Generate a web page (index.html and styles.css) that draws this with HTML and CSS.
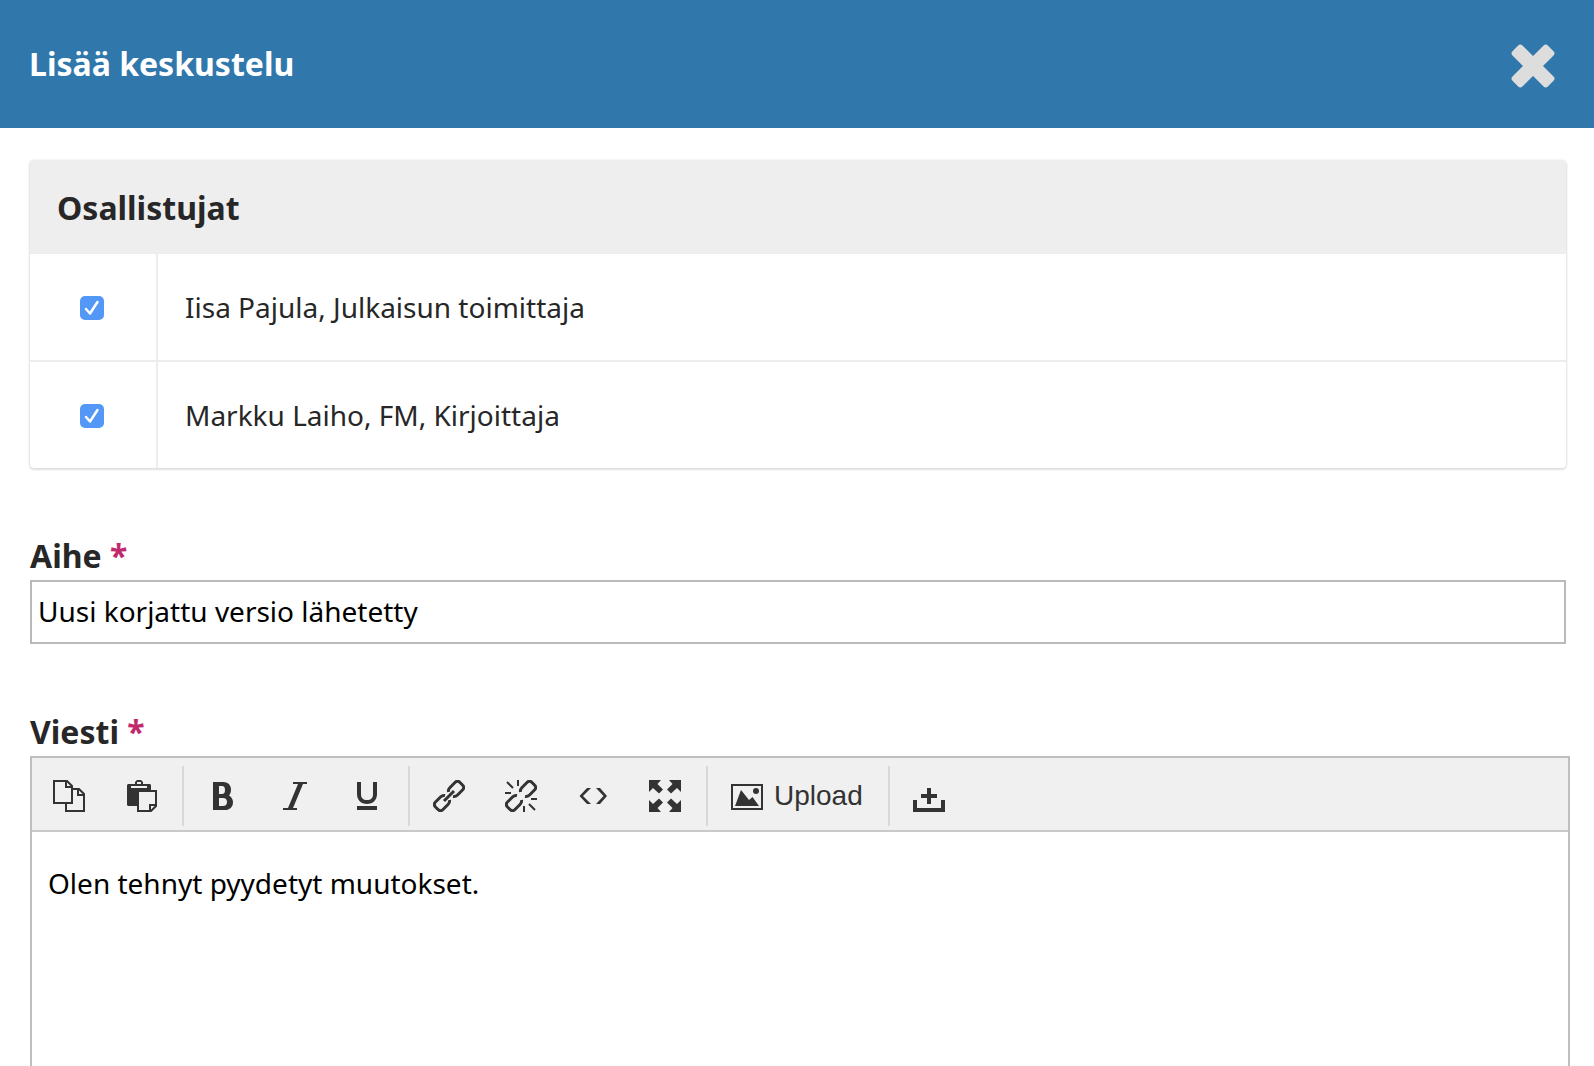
FILE: index.html
```html
<!DOCTYPE html>
<html lang="fi">
<head>
<meta charset="utf-8">
<meta name="viewport" content="width=device-width, initial-scale=1">
<title>Lisää keskustelu</title>
<link rel="stylesheet" href="styles.css">
</head>
<body>
<div class="modal" role="dialog" aria-labelledby="modal-title">
  <header class="modal-header">
    <h1 class="modal-title" id="modal-title">Lisää keskustelu</h1>
    <button class="close" type="button" aria-label="Sulje">
      <svg width="44" height="48" viewBox="-22 -26 44 48" fill="currentColor">
        <rect x="-25" y="-7" width="50" height="14" rx="3" transform="rotate(45)"/>
        <rect x="-25" y="-7" width="50" height="14" rx="3" transform="rotate(-45)"/>
      </svg>
    </button>
  </header>

  <form class="modal-body">
    <table class="participants">
      <thead>
        <tr><th colspan="2">Osallistujat</th></tr>
      </thead>
      <tbody>
        <tr>
          <td class="pick"><input class="check" type="checkbox" id="user-1" checked></td>
          <td><label for="user-1">Iisa Pajula, Julkaisun toimittaja</label></td>
        </tr>
        <tr>
          <td class="pick"><input class="check" type="checkbox" id="user-2" checked></td>
          <td><label for="user-2">Markku Laiho, FM, Kirjoittaja</label></td>
        </tr>
      </tbody>
    </table>

    <div class="field">
      <label class="field-label" for="subject">Aihe <span class="required">*</span></label>
      <input class="text-input" type="text" id="subject" value="Uusi korjattu versio lähetetty">
    </div>

    <div class="field field-message">
      <label class="field-label" for="message">Viesti <span class="required">*</span></label>
      <div class="editor">
        <div class="toolbar" role="toolbar">
          <div class="group">
            <button class="tool" type="button" aria-label="Copy">
              <svg class="icon line" viewBox="0 0 32 32"><path d="M1 1H14L19 6V23H1ZM13 1V7H19M19 9H26L31 14V31H13V23M25 9V15H31"/></svg>
            </button>
            <button class="tool" type="button" aria-label="Paste">
              <svg class="icon" viewBox="0 0 32 32"><path fill-rule="evenodd" d="M2 5L3 4H10V2L12 0H16L18 2V4H25L26 5V10H12V26H3L2 25ZM12 2V4H16V2ZM6 6V8H22V6Z"/><path class="line" d="M13 11H31V26L26 31H13ZM25 31V25H31"/></svg>
            </button>
          </div>
          <div class="group">
            <button class="tool" type="button" aria-label="Bold">
              <svg class="icon" viewBox="0 0 32 32"><path fill-rule="evenodd" d="M6 2H16C21 2 24 5 24 9.500C24 12 23.500 14 22 15.400C24.600 17 26 19.400 26 22.200C26 27 22.600 30 18 30H6ZM12 6V14H15C17 14 18 12.400 18 10S17 6 15 6ZM12 18V26H16C18.600 26 20 24.400 20 22S18.600 18 16 18Z"/></svg>
            </button>
            <button class="tool" type="button" aria-label="Italic">
              <svg class="icon" viewBox="0 0 32 32"><path d="M14 2H28V4H24L14 28H18V30H4V28H9L19 4H14Z"/></svg>
            </button>
            <button class="tool" type="button" aria-label="Underline">
              <svg class="icon" viewBox="0 0 32 32"><path d="M6 2H10V14C10 18 12 20 16 20S22 18 22 14V2H26V14C26 20 22 24 16 24S6 20 6 14ZM6 26H26V30H6Z"/></svg>
            </button>
          </div>
          <div class="group">
            <button class="tool" type="button" aria-label="Insert link">
              <svg class="icon line chain" viewBox="0 0 32 32"><path d="M15.500 12Q15 9.500 17 7.500L22 2.500Q24.500 0 27 2.500L29.500 5Q32 7.500 29.500 10L24.500 15Q22.500 17 20 16.500M16.500 20Q17 22.500 15 24.500L10 29.500Q7.500 32 5 29.500L2.500 27Q0 24.500 2.500 22L7.500 17Q9.500 15 12 15.500M11 21L21 11"/></svg>
            </button>
            <button class="tool" type="button" aria-label="Remove link">
              <svg class="icon line" viewBox="0 0 32 32"><path class="chain" d="M15.500 12Q15 9.500 17 7.500L22 2.500Q24.500 0 27 2.500L29.500 5Q32 7.500 29.500 10L24.500 15Q22.500 17 20 16.500M16.500 20Q17 22.500 15 24.500L10 29.500Q7.500 32 5 29.500L2.500 27Q0 24.500 2.500 22L7.500 17Q9.500 15 12 15.500"/><path d="M2 2L8 8M13 0V6M0 13H6M26 19H32M19 26V32M24 24L30 30"/></svg>
            </button>
            <button class="tool" type="button" aria-label="Source code">
              <svg class="icon" viewBox="0 0 32 32"><path d="M10 8H14L6 16L14 24H10L2.500 16ZM19 8H23L30 16L23 24H19L26.500 16Z"/></svg>
            </button>
            <button class="tool" type="button" aria-label="Fullscreen">
              <svg class="icon" viewBox="0 0 32 32"><path d="M0 0H12L8.500 4L14 9.500L10 13.500L4 8L0 12ZM32 0V12L28 8L22 13.500L18 9.500L23.500 4L20 0ZM0 32V20L4 24L10 18.500L14 22.500L8.500 28L12 32ZM32 32H20L23.500 28L18 22.500L22 18.500L28 24L32 20Z"/></svg>
            </button>
          </div>
          <div class="group">
            <button class="tool" type="button">
              <svg class="icon" viewBox="0 0 32 32"><path fill-rule="evenodd" d="M0 4H32V30H0ZM2 6V28H30V6Z"/><path d="M4 26L10 10L18 20L21.500 17L28 26Z"/><circle cx="25" cy="11" r="3"/></svg>
              Upload
            </button>
          </div>
          <div class="group">
            <button class="tool" type="button" aria-label="Insert content">
              <svg class="icon" viewBox="0 0 32 32"><path d="M0 20H4V28H28V20H32V32H0ZM14 8H18V14H24V18H18V24H14V18H8V14H14Z"/></svg>
            </button>
          </div>
        </div>
        <textarea class="message" id="message">Olen tehnyt pyydetyt muutokset.</textarea>
      </div>
    </div>
  </form>
</div>
</body>
</html>
```
FILE: styles.css
```css
* {
  box-sizing: border-box;
}

body {
  margin: 0;
  background: #fff;
  color: #272727;
  font: 28px/40px "Noto Sans", sans-serif;
}

.modal {
  display: flex;
  flex-direction: column;
  min-height: 100vh;
}

.modal-header {
  display: flex;
  align-items: center;
  justify-content: space-between;
  height: 128px;
  padding: 0 39px 0 29px;
  background: #3077ac;
  color: #fff;
}

.modal-title {
  margin: 0;
  font-size: 32px;
  font-weight: 700;
}

button {
  border: 0;
  background: none;
  font: inherit;
  cursor: pointer;
}

.close {
  display: flex;
  padding: 0;
  color: #ddd;
}

.modal-body {
  display: flex;
  flex: 1;
  flex-direction: column;
  gap: 68px;
  padding: 32px 28px 0 30px;
}

/* Participants */

.participants {
  width: 100%;
  border-spacing: 0;
  border-radius: 4px;
  box-shadow: 0 1px 2px 1px #e0e0e0;
}

.participants th {
  height: 94px;
  padding: 2px 27px 0;
  border-radius: 4px 4px 0 0;
  background: #eee;
  font-size: 32px;
  text-align: left;
}

.participants td {
  height: 108px;
  padding: 0 27px;
  border-bottom: 2px solid #ededed;
}

.participants tr:last-child td {
  height: 106px;
  border-bottom: 0;
}

.participants .pick {
  width: 128px;
  padding: 2px 0 0 50px;
  border-right: 2px solid #ededed;
}

.check {
  display: block;
  width: 24px;
  height: 24px;
  margin: 0;
  border-radius: 5px;
  appearance: none;
  background: #ededed;
}

.check:checked {
  background: #5397f7 url("data:image/svg+xml,%3Csvg xmlns='http://www.w3.org/2000/svg' viewBox='0 0 24 24'%3E%3Cpath d='M6 13L10 17.500L17.500 6' fill='none' stroke='white' stroke-width='2.500' stroke-linecap='round' stroke-linejoin='round'/%3E%3C/svg%3E");
}

/* Fields */

.field {
  display: flex;
  flex-direction: column;
  gap: 4px;
}

.field-message {
  flex: 1;
}

.field-label {
  font-size: 32px;
  font-weight: 700;
}

.required {
  color: #c02a6c;
}

.text-input {
  width: 100%;
  height: 64px;
  padding: 0 6px 2px;
  border: 2px solid #b9b9b9;
  border-radius: 0;
  background: #fff;
  color: #000;
  font: inherit;
}

/* Editor */

.editor {
  display: flex;
  flex: 1;
  flex-direction: column;
  margin-right: -4px;
  border: 2px solid #bebebe;
  border-bottom: 0;
}

.toolbar {
  display: flex;
  padding: 8px 0 4px;
  border-bottom: 2px solid #c9c9c9;
  background: #f0f0f0;
}

.group {
  display: flex;
  padding: 0 5px 0 3px;
}

.group:first-child {
  padding-left: 1px;
}

.group + .group {
  border-left: 2px solid #d8d8d8;
}

.tool {
  display: flex;
  align-items: center;
  gap: 11px;
  height: 60px;
  padding: 0 20px;
  color: #333;
  font-family: "Liberation Sans", Arial, sans-serif;
}

.icon {
  width: 32px;
  height: 32px;
  fill: currentColor;
}

.line {
  fill: none;
  stroke: currentColor;
  stroke-width: 2;
}

.chain {
  stroke-width: 3;
}

.message {
  flex: 1;
  min-height: 232px;
  padding: 31px 16px;
  border: 0;
  outline: 0;
  resize: none;
  background: #fff;
  color: #000;
  font: inherit;
}
```
